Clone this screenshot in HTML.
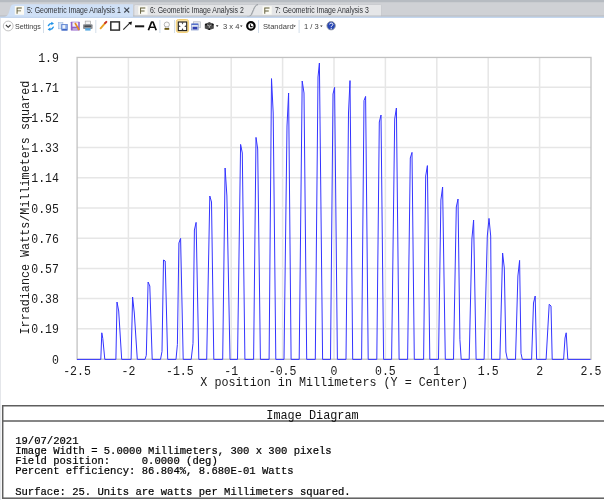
<!DOCTYPE html>
<html><head><meta charset="utf-8">
<style>
html,body{margin:0;padding:0;width:604px;height:500px;overflow:hidden;background:#fff;}
body{position:relative;font-family:"Liberation Sans",sans-serif;}
.gs{will-change:transform;}
.abs{position:absolute;}
#tabbar{left:0;top:0;width:604px;height:18px;background:#cfd1d5;}
.tabtxt{position:absolute;top:5.8px;font-size:8.2px;color:#303236;white-space:nowrap;transform-origin:0 0;transform:scaleX(0.845);}
#toolbar{left:0;top:18px;width:604px;height:16px;background:#fff;}
.tb{position:absolute;font-size:7.9px;color:#3e3e3e;top:4.0px;white-space:nowrap;transform-origin:0 0;}
#leftstrip{left:0;top:18px;width:1.4px;height:482px;background:#e4e6ea;}
svg text{font-family:"Liberation Mono",monospace;}
</style></head>
<body><div class="gs" style="position:absolute;left:0;top:0;width:604px;height:500px;background:#fff">
<div id="tabbar" class="abs">
  <svg class="abs" style="left:0;top:0" width="604" height="18">
    <rect x="0" y="0" width="604" height="2" fill="#b6bbc1"/>
    <rect x="0" y="2" width="604" height="1" fill="#c9ccd0"/>
    <!-- tab 3 -->
    <path d="M248,17 C251,17 252,15 253,12 L255,7.5 C256,5.2 257.5,4.5 260,4.5 L380,4.5 C381,4.5 381.5,5 381.5,6 L381.5,17 Z" fill="#e5e6e8" stroke="#c3c6ca" stroke-width="0.7"/>
    <!-- tab 2 -->
    <path d="M134,17 L134,6.5 C134,5 135,4.5 136.5,4.5 L258,4.5 C255.5,5 254.5,7 253.5,9.5 L252,13 C251,15.5 250,16.8 247,16.8 L246,17 Z" fill="#e3e4e6" stroke="#c3c6ca" stroke-width="0.7"/>
    <path d="M258,4.5 C255.5,5 254.5,7 253.5,9.5 L252,13 C251,15.5 250,16.8 247,16.8" fill="none" stroke="#8c9096" stroke-width="0.8"/>
    <rect x="0" y="15.6" width="604" height="1" fill="#b2b5ba"/>
    <!-- active tab -->
    <path d="M3,17 C6.5,17 8,15.5 9,12 L10.5,7 C11.2,5 12.2,4.2 14.5,4.2 L133,4.2 L133,17 Z" fill="#cfe0f6"/>
    <rect x="0" y="16.6" width="604" height="1.5" fill="#c3d6ef"/>
    <!-- F icons -->
    <rect x="14.8" y="6" width="9.2" height="8.8" fill="#fbfaf3"/>
    <rect x="138.3" y="6.2" width="9.2" height="8.4" fill="#fbfaf3"/>
    <rect x="262.5" y="6.2" width="9.2" height="8.4" fill="#fbfaf3"/>
    <g fill="#5c5834">
      <path d="M16.6,7.5 h5.2 v0.95 h-4.25 v2 h3.5 v0.9 h-3.5 v2.5 h-0.95 z"/>
      <path d="M140.1,7.6 h5.2 v0.95 h-4.25 v2 h3.5 v0.9 h-3.5 v2.4 h-0.95 z"/>
      <path d="M264.3,7.6 h5.2 v0.95 h-4.25 v2 h3.5 v0.9 h-3.5 v2.4 h-0.95 z"/>
    </g>
    <path d="M124.3,7.6 L129.2,12.5 M129.2,7.6 L124.3,12.5" stroke="#3f4651" stroke-width="1.1"/>
  </svg>
  <div class="tabtxt" style="left:27px">5: Geometric Image Analysis 1</div>
  <div class="tabtxt" style="left:150px">6: Geometric Image Analysis 2</div>
  <div class="tabtxt" style="left:274.6px">7: Geometric Image Analysis 3</div>
</div>
<div id="toolbar" class="abs">
  <svg class="abs" style="left:0;top:0" width="604" height="16">
    <!-- settings chevron circle -->
    <circle cx="8.2" cy="8" r="4.9" fill="none" stroke="#a6a6a6" stroke-width="0.7"/>
    <path d="M5.9,7 L8.2,9.3 L10.5,7" fill="none" stroke="#3a3a3a" stroke-width="1.1"/>
    <!-- separators -->
    <g fill="#d3deea">
      <rect x="43" y="2" width="1" height="13"/>
      <rect x="95.3" y="2" width="1" height="13"/>
      <rect x="159.4" y="2" width="1" height="13"/>
      <rect x="174" y="2" width="1" height="13"/>
      <rect x="258" y="2" width="1" height="13"/>
      <rect x="298.6" y="2" width="1" height="13"/>
    </g>
    <!-- refresh -->
    <g stroke="#2193e8" stroke-width="1.4" fill="none" stroke-linecap="round">
      <path d="M48.4,7.6 C49.1,6 50.4,5.3 52,5.4"/>
      <path d="M53.2,9.2 C52.5,10.8 51.2,11.5 49.6,11.4"/>
    </g>
    <g fill="#2193e8">
      <path d="M51.3,3.7 L54,5.4 L51.3,7.2 Z"/>
      <path d="M50.3,9.6 L47.6,11.4 L50.3,13.1 Z"/>
    </g>
    <!-- copy -->
    <rect x="58.3" y="4.6" width="4.6" height="6.2" fill="#d5e3f5" stroke="#9fbbe0" stroke-width="0.6"/>
    <rect x="61.7" y="6.3" width="5.6" height="6.1" fill="#86a8e4" stroke="#4c72c8" stroke-width="0.6"/>
    <rect x="62.5" y="7.1" width="2.8" height="3.4" fill="#eef3fb"/>
    <rect x="62.2" y="11" width="4.7" height="1.1" fill="#4266c4"/>
    <!-- save -->
    <rect x="70.8" y="3.7" width="9" height="8.8" rx="0.6" fill="#8f5fc9"/>
    <rect x="72.4" y="4.3" width="5.8" height="4.4" fill="#f1eef7"/>
    <rect x="72.6" y="10" width="5" height="2" fill="#b8a2d8"/>
    <path d="M75,5 L79.2,12" stroke="#e68a1c" stroke-width="1.6"/>
    <!-- printer -->
    <rect x="85.2" y="3.1" width="5.4" height="3.4" fill="#f2f2f2" stroke="#9a9a9a" stroke-width="0.6"/>
    <rect x="83" y="6.3" width="9.6" height="4.6" rx="1" fill="#8d9196"/>
    <rect x="84.4" y="7.5" width="6.8" height="1.4" fill="#3f4347"/>
    <rect x="85.2" y="10.2" width="5.4" height="2.4" fill="#58a9e0"/>
    <!-- pencil -->
    <path d="M100.6,10.3 L105.6,4.6" stroke="#e8a224" stroke-width="1.9" stroke-linecap="round"/>
    <path d="M105,5.2 L106.4,3.8" stroke="#c8302a" stroke-width="1.9" stroke-linecap="round"/>
    <!-- square -->
    <rect x="110.8" y="3.9" width="8.6" height="8.2" fill="none" stroke="#303030" stroke-width="1.5"/>
    <!-- arrow -->
    <path d="M123.3,11.6 L130.2,4.7" stroke="#262626" stroke-width="1.1"/>
    <path d="M132,3.6 L128.3,4.4 L131.2,7.3 Z" fill="#111"/>
    <!-- dash -->
    <rect x="135" y="7.3" width="9.2" height="2" fill="#1a1a1a"/>
    <!-- A -->
    <path d="M148.4,12.2 L151.6,4 L153,4 L156.2,12.2" fill="none" stroke="#0c0c0c" stroke-width="1.7" stroke-linejoin="round"/>
    <path d="M149.8,9.3 L154.8,9.3" stroke="#0c0c0c" stroke-width="1.4"/>
    <!-- bulb -->
    <circle cx="166.8" cy="6.6" r="2.6" fill="#fbfbfb" stroke="#9a9a9a" stroke-width="0.7"/>
    <rect x="165.2" y="8.4" width="3.2" height="1.6" fill="#efefef" stroke="#a8a8a8" stroke-width="0.5"/>
    <rect x="164.5" y="10" width="4.7" height="1.8" fill="#6b5a12"/>
    <!-- highlighted -->
    <rect x="176.3" y="1.5" width="12.3" height="12.9" rx="2.2" fill="#f9e3a6" stroke="#f1c868" stroke-width="0.9"/>
    <rect x="178.3" y="4" width="8.4" height="8.6" fill="#fff" stroke="#1c1c1c" stroke-width="1.1"/>
    <g fill="#3a3a3a">
      <path d="M178.6,7.3 L180.9,8.3 L178.6,9.3 Z"/>
      <path d="M186.4,7.3 L184.1,8.3 L186.4,9.3 Z"/>
      <path d="M181.5,4.3 L182.5,6.5 L183.5,4.3 Z"/>
      <path d="M181.5,12.3 L182.5,10.1 L183.5,12.3 Z"/>
    </g>
    <!-- windows -->
    <rect x="193.5" y="3.8" width="6.8" height="6" fill="#e8ebef" stroke="#a9b0b8" stroke-width="0.6"/>
    <rect x="191.6" y="6" width="6.6" height="6" fill="#dfe6f2" stroke="#6c84c0" stroke-width="0.6"/>
    <rect x="192.6" y="8.8" width="4.8" height="2.6" fill="#2f3fb0"/>
    <rect x="191.6" y="5.6" width="6.6" height="1.3" fill="#4a67c8"/>
    <!-- gear/cube -->
    <path d="M209.3,4 L213.8,6.3 L213.8,10.6 L209.3,12 L204.8,10.6 L204.8,6.3 Z" fill="#4a4a4a"/>
    <path d="M207,6.8 L209.3,8 L211.6,6.8 M209.3,8 L209.3,10.5" stroke="#bdbdbd" stroke-width="0.8" fill="none"/>
    <circle cx="206" cy="6.6" r="1" fill="#111"/><circle cx="212.6" cy="6.6" r="1" fill="#111"/><circle cx="209.3" cy="11.2" r="0.9" fill="#111"/>
    <!-- dropdown arrows -->
    <g fill="#222">
      <path d="M215.9,7.3 h2.6 l-1.3,1.8 z"/>
      <path d="M240,7.4 h2.5 l-1.25,1.7 z"/>
      <path d="M293.3,7.4 h2.5 l-1.25,1.7 z"/>
      <path d="M320.1,7.4 h2.5 l-1.25,1.7 z"/>
    </g>
    <!-- black ring -->
    <circle cx="250.9" cy="7.9" r="3.7" fill="#fff" stroke="#050505" stroke-width="2.2"/>
    <path d="M250.4,6.2 L250.6,8.6 L252.6,8.6" stroke="#111" stroke-width="1.1" fill="none"/>
    <!-- help -->
    <circle cx="331.1" cy="7.7" r="4.2" fill="#2746b4" stroke="#8d939c" stroke-width="0.9"/>
    <path d="M329.6,6.4 C329.6,4.6 332.9,4.6 332.9,6.4 C332.9,7.6 331.2,7.8 331.2,9.2" fill="none" stroke="#fff" stroke-width="1"/>
    <circle cx="331.2" cy="10.7" r="0.6" fill="#fff"/>
  </svg>
  <div class="tb" style="left:14.8px;transform:scaleX(0.905)">Settings</div>
  <div class="tb" style="left:222.6px;transform:scaleX(0.96)">3 x 4</div>
  <div class="tb" style="left:262.6px;transform:scaleX(0.96)">Standard</div>
  <div class="tb" style="left:304px;transform:scaleX(0.96)">1 / 3</div>
</div>
<div id="leftstrip" class="abs"></div>

<svg class="abs" style="left:0;top:0" width="604" height="500">
  <g stroke="#e6e6e6" stroke-width="1.5">
<line x1="128.4" y1="57" x2="128.4" y2="359"/>
<line x1="179.8" y1="57" x2="179.8" y2="359"/>
<line x1="231.2" y1="57" x2="231.2" y2="359"/>
<line x1="282.6" y1="57" x2="282.6" y2="359"/>
<line x1="334.0" y1="57" x2="334.0" y2="359"/>
<line x1="385.4" y1="57" x2="385.4" y2="359"/>
<line x1="436.8" y1="57" x2="436.8" y2="359"/>
<line x1="488.2" y1="57" x2="488.2" y2="359"/>
<line x1="539.6" y1="57" x2="539.6" y2="359"/>
<line x1="77" y1="87.2" x2="591" y2="87.2"/>
<line x1="77" y1="117.4" x2="591" y2="117.4"/>
<line x1="77" y1="147.6" x2="591" y2="147.6"/>
<line x1="77" y1="177.8" x2="591" y2="177.8"/>
<line x1="77" y1="208.0" x2="591" y2="208.0"/>
<line x1="77" y1="238.2" x2="591" y2="238.2"/>
<line x1="77" y1="268.4" x2="591" y2="268.4"/>
<line x1="77" y1="298.6" x2="591" y2="298.6"/>
<line x1="77" y1="328.8" x2="591" y2="328.8"/>
  </g>
  <rect x="77.1" y="57.45" width="513.9" height="301.8" fill="none" stroke="#c2c2c2" stroke-width="1.3"/>
  <polyline points="77.00,359.40 100.80,359.40 101.80,332.80 102.80,338.50 104.80,359.40 115.90,359.40 117.00,302.00 118.70,311.00 121.70,359.40 131.10,359.40 132.60,297.00 134.30,313.00 137.30,359.40 145.00,359.40 146.30,355.30 148.10,282.00 149.80,286.00 152.20,359.40 160.50,359.40 162.00,351.50 163.50,260.00 165.20,261.00 167.70,359.40 176.00,359.40 177.40,344.40 178.90,243.00 180.60,238.40 183.20,359.40 191.20,359.40 193.00,343.50 194.40,230.00 196.10,222.40 198.80,359.40 206.70,359.40 209.80,196.00 211.50,202.00 213.80,359.40 222.70,359.40 225.10,168.00 226.90,196.00 230.00,359.40 237.50,359.40 240.60,144.40 242.30,153.00 244.90,359.40 253.60,359.40 256.00,137.40 257.70,149.00 260.40,359.40 269.10,359.40 271.50,78.60 273.20,113.00 275.80,359.40 284.00,359.40 287.00,126.00 288.60,93.00 291.10,359.40 299.20,359.40 302.20,81.00 304.00,93.00 306.70,359.40 315.30,359.40 318.00,77.00 319.40,63.00 322.60,359.40 330.50,359.40 333.00,94.00 334.60,87.40 337.40,359.40 346.00,359.40 348.50,113.00 350.00,80.60 352.70,359.40 361.60,359.40 364.00,100.60 365.60,96.40 368.20,359.40 376.80,359.40 379.30,122.00 381.00,115.00 383.60,359.40 391.60,359.40 394.70,119.00 396.40,108.00 399.10,359.40 407.60,359.40 410.30,158.00 412.00,152.40 414.30,359.40 423.60,359.40 425.70,176.00 427.40,165.60 429.80,359.40 438.50,359.40 440.90,200.00 442.60,187.00 445.30,359.40 453.50,359.40 456.30,207.00 458.00,199.00 459.90,339.70 461.20,359.40 469.20,359.40 471.90,239.00 473.60,220.00 476.10,359.40 484.10,359.40 487.30,236.00 489.00,218.40 490.70,236.00 491.60,359.40 499.90,359.40 502.60,253.00 504.30,268.00 505.90,352.00 507.40,359.40 515.50,359.40 517.90,276.00 519.60,260.40 521.00,353.30 522.30,359.40 531.60,359.40 533.50,303.00 535.20,296.00 536.60,359.40 546.10,359.40 549.20,304.30 551.00,306.00 552.20,359.40 563.60,359.40 565.00,338.00 566.20,332.80 567.80,359.40 590.50,359.40" fill="none" stroke="#3434ff" stroke-width="1.0" stroke-linejoin="miter"/>
  <g font-size="11.2" fill="#1a1a1a">
<text transform="translate(58.9,61.66) scale(1.03,1.18)" text-anchor="end">1.9</text>
<text transform="translate(58.9,91.86) scale(1.03,1.18)" text-anchor="end">1.71</text>
<text transform="translate(58.9,122.06) scale(1.03,1.18)" text-anchor="end">1.52</text>
<text transform="translate(58.9,152.26) scale(1.03,1.18)" text-anchor="end">1.33</text>
<text transform="translate(58.9,182.46) scale(1.03,1.18)" text-anchor="end">1.14</text>
<text transform="translate(58.9,212.66) scale(1.03,1.18)" text-anchor="end">0.95</text>
<text transform="translate(58.9,242.86) scale(1.03,1.18)" text-anchor="end">0.76</text>
<text transform="translate(58.9,273.06) scale(1.03,1.18)" text-anchor="end">0.57</text>
<text transform="translate(58.9,303.26) scale(1.03,1.18)" text-anchor="end">0.38</text>
<text transform="translate(58.9,333.46) scale(1.03,1.18)" text-anchor="end">0.19</text>
<text transform="translate(58.9,363.66) scale(1.03,1.18)" text-anchor="end">0</text>
<text transform="translate(77.00,374.76) scale(1.03,1.18)" text-anchor="middle">-2.5</text>
<text transform="translate(128.40,374.76) scale(1.03,1.18)" text-anchor="middle">-2</text>
<text transform="translate(179.80,374.76) scale(1.03,1.18)" text-anchor="middle">-1.5</text>
<text transform="translate(231.20,374.76) scale(1.03,1.18)" text-anchor="middle">-1</text>
<text transform="translate(282.60,374.76) scale(1.03,1.18)" text-anchor="middle">-0.5</text>
<text transform="translate(334.00,374.76) scale(1.03,1.18)" text-anchor="middle">0</text>
<text transform="translate(385.40,374.76) scale(1.03,1.18)" text-anchor="middle">0.5</text>
<text transform="translate(436.80,374.76) scale(1.03,1.18)" text-anchor="middle">1</text>
<text transform="translate(488.20,374.76) scale(1.03,1.18)" text-anchor="middle">1.5</text>
<text transform="translate(539.60,374.76) scale(1.03,1.18)" text-anchor="middle">2</text>
<text transform="translate(591.00,374.76) scale(1.03,1.18)" text-anchor="middle">2.5</text>
  </g>
  <text transform="translate(334.2,385.6) scale(1,1.1)" font-size="11.75" text-anchor="middle" fill="#1a1a1a">X position in Millimeters (Y = Center)</text>
  <text transform="translate(28.5,207.6) rotate(-90) scale(1,1.15)" font-size="11.75" text-anchor="middle" fill="#1a1a1a">Irradiance Watts/Millimeters squared</text>
</svg>

<svg class="abs" style="left:0;top:0" width="604" height="500">
  <rect x="2.7" y="405.75" width="640" height="92.45" fill="none" stroke="#5e5e5e" stroke-width="1.5"/>
  <line x1="2.7" y1="421" x2="604" y2="421" stroke="#5e5e5e" stroke-width="1.5"/>
  <text transform="translate(312.5,419) scale(1,1.08)" font-size="11.85" text-anchor="middle" fill="#111">Image Diagram</text>
  <g font-size="10.55" fill="#000" stroke="#000" stroke-width="0.2" style="white-space:pre">
    <text x="15.2" y="443.5" xml:space="preserve">19/07/2021</text>
    <text x="15.2" y="453.8" xml:space="preserve">Image Width = 5.0000 Millimeters, 300 x 300 pixels</text>
    <text x="15.2" y="464.1" xml:space="preserve">Field position:     0.0000 (deg)</text>
    <text x="15.2" y="474.4" xml:space="preserve">Percent efficiency: 86.804%, 8.680E-01 Watts</text>
    <text x="15.2" y="495" xml:space="preserve">Surface: 25. Units are watts per Millimeters squared.</text>
  </g>
</svg>
</div></body></html>
